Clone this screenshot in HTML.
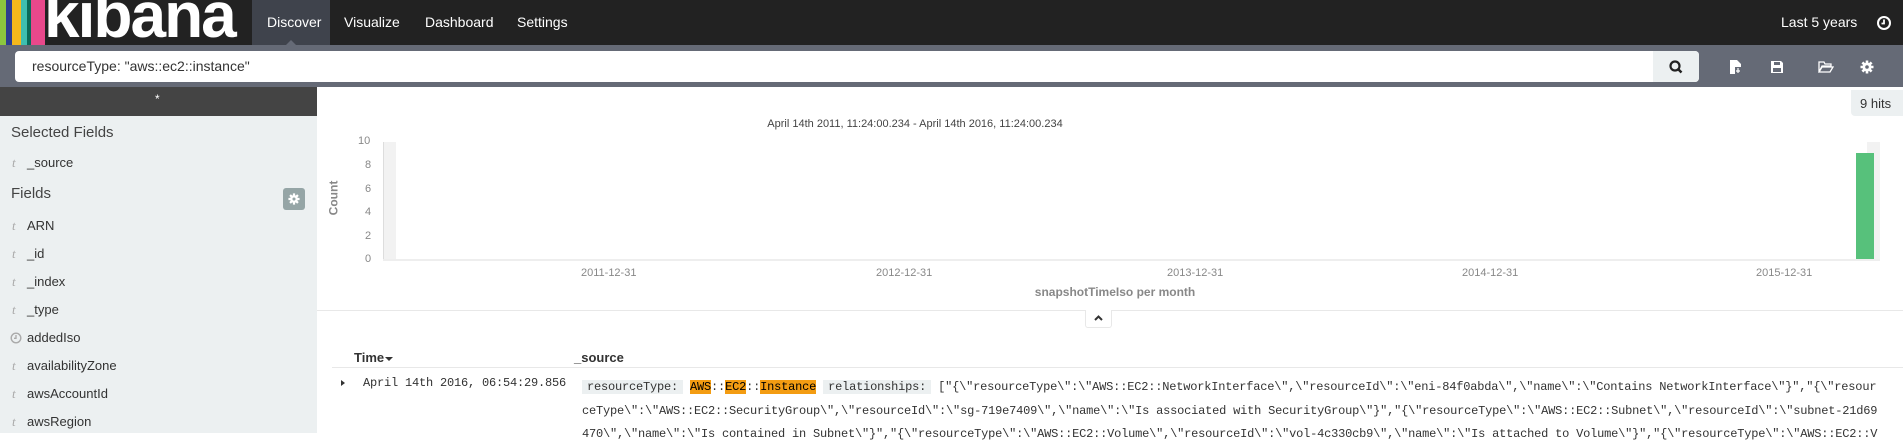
<!DOCTYPE html>
<html><head><meta charset="utf-8"><style>
*{margin:0;padding:0;box-sizing:border-box}
body{width:1903px;height:433px;overflow:hidden;background:#fff;font-family:"Liberation Sans",sans-serif;position:relative}
.a{position:absolute}
.nav{left:0;top:0;width:1903px;height:45px;background:#222}
.bar{top:0;height:45px}
.logo{left:44px;top:-17px;font-size:64px;font-weight:bold;color:#fff;letter-spacing:-2px;line-height:64px}
.tab{top:0;height:45px;line-height:45px;color:#fff;font-size:14px}
.srow{left:0;top:45px;width:1903px;height:42px;background:#656a76}
.side{left:0;top:87px;width:317px;height:346px;background:#ecf0f1}
.fld{left:27px;font-size:13px;color:#333}
.t{left:12px;font-size:13px;color:#aaa;font-family:"Liberation Serif",serif;font-style:italic}
.mono{font-family:"Liberation Mono",monospace;font-size:12px;letter-spacing:-0.2px;color:#333;white-space:pre}
.ax{color:#888;font-size:11px}
.hl{background:#f39c12;color:#000}
.key{background:#ecf0f1;padding:2px 5px}
</style></head><body>
<div class="a nav"></div>
<div class="a bar" style="left:0;width:6px;background:#8cc63f"></div>
<div class="a bar" style="left:6px;width:6px;background:#2d3e8f"></div>
<div class="a bar" style="left:12px;width:9px;background:#f5b81c"></div>
<div class="a bar" style="left:21px;width:6px;background:#3ebeb0"></div>
<div class="a bar" style="left:27px;width:4px;background:#0a6b5a"></div>
<div class="a bar" style="left:31px;width:14px;background:#e8488b"></div>
<div class="a logo">kibana</div>
<div class="a" style="left:252px;top:0;width:78px;height:45px;background:#3f434c"></div>
<div class="a" style="left:286px;top:40px;width:0;height:0;border-left:5px solid transparent;border-right:5px solid transparent;border-bottom:5px solid #656a76"></div>
<div class="a tab" style="left:267px">Discover</div>
<div class="a tab" style="left:344px">Visualize</div>
<div class="a tab" style="left:425px">Dashboard</div>
<div class="a tab" style="left:517px">Settings</div>
<div class="a" style="left:1781px;top:14px;color:#fff;font-size:14px">Last 5 years</div>
<svg class="a" style="left:1876px;top:15px" width="16" height="16" viewBox="0 0 16 16"><circle cx="8" cy="8" r="6" fill="none" stroke="#fff" stroke-width="2"/><path d="M8 4.5V8.5H5.5" stroke="#fff" stroke-width="1.8" fill="none"/></svg>
<div class="a srow"></div>
<div class="a" style="left:15px;top:51px;width:1684px;height:31px;background:#fff;border-radius:4px"></div>
<div class="a" style="left:1653px;top:51px;width:46px;height:31px;background:#ecf0f1;border-radius:0 4px 4px 0"></div>
<svg class="a" style="left:1668px;top:59px" width="16" height="16" viewBox="0 0 16 16"><circle cx="7" cy="7" r="4.5" fill="none" stroke="#222" stroke-width="2.2"/><path d="M10 10l3.5 3.5" stroke="#222" stroke-width="2.5"/></svg>
<div class="a" style="left:32px;top:58px;font-size:14px;color:#333">resourceType: "aws::ec2::instance"</div>
<svg class="a" style="left:1729px;top:59px" width="14" height="16" viewBox="0 0 14 16"><path d="M1 1h7l4 4v10H1z" fill="#fff"/><path d="M6 8h6v7H6z" fill="#656a76"/><path d="M9 9v5M7 12h4" stroke="#fff" stroke-width="1.2"/></svg>
<svg class="a" style="left:1770px;top:60px" width="14" height="14" viewBox="0 0 14 14"><path d="M1 1h10l2 2v10H1z" fill="#fff"/><rect x="4" y="2" width="6" height="3" fill="#656a76"/><rect x="3" y="8" width="8" height="4" fill="#656a76"/></svg>
<svg class="a" style="left:1818px;top:61px" width="16" height="12" viewBox="0 0 16 12"><path d="M1 1h5l1 2h6v2H4L1 11z M4 6h11l-3 5H1z" fill="none" stroke="#fff" stroke-width="1.3"/></svg>
<svg class="a" style="left:1860px;top:60px" width="14" height="14" viewBox="0 0 14 14"><circle cx="7" cy="7" r="4.5" fill="#fff"/><g stroke="#fff" stroke-width="2.6"><path d="M7 0.5v13M0.5 7h13M2.4 2.4l9.2 9.2M11.6 2.4l-9.2 9.2"/></g><circle cx="7" cy="7" r="1.8" fill="#656a76"/></svg>
<div class="a side"></div>
<div class="a" style="left:0;top:87px;width:317px;height:29px;background:#444"></div>
<div class="a" style="left:155px;top:92px;color:#fff;font-size:12px">*</div>
<div class="a" style="left:11px;top:124px;font-size:15px;color:#444">Selected Fields</div>
<div class="a t" style="top:155px">t</div><div class="a fld" style="top:155px">_source</div>
<div class="a" style="left:11px;top:185px;font-size:15px;color:#444">Fields</div>
<div class="a" style="left:283px;top:188px;width:22px;height:22px;background:#95a5a6;border-radius:3px"></div>
<svg class="a" style="left:288px;top:193px" width="12" height="12" viewBox="0 0 14 14"><circle cx="7" cy="7" r="4.5" fill="#fff"/><g stroke="#fff" stroke-width="2.6"><path d="M7 0.5v13M0.5 7h13M2.4 2.4l9.2 9.2M11.6 2.4l-9.2 9.2"/></g><circle cx="7" cy="7" r="1.8" fill="#95a5a6"/></svg>
<div class="a t" style="top:218px">t</div><div class="a fld" style="top:218px">ARN</div>
<div class="a t" style="top:246px">t</div><div class="a fld" style="top:246px">_id</div>
<div class="a t" style="top:274px">t</div><div class="a fld" style="top:274px">_index</div>
<div class="a t" style="top:302px">t</div><div class="a fld" style="top:302px">_type</div>
<svg class="a" style="left:10px;top:332px" width="12" height="12" viewBox="0 0 12 12"><circle cx="6" cy="6" r="4.8" fill="none" stroke="#aaa" stroke-width="1.4"/><path d="M6 3v3.3H4" stroke="#aaa" stroke-width="1.3" fill="none"/></svg>
<div class="a fld" style="top:330px">addedIso</div>
<div class="a t" style="top:358px">t</div><div class="a fld" style="top:358px">availabilityZone</div>
<div class="a t" style="top:386px">t</div><div class="a fld" style="top:386px">awsAccountId</div>
<div class="a t" style="top:414px">t</div><div class="a fld" style="top:414px">awsRegion</div>
<div class="a" style="left:1851px;top:90px;width:52px;height:26px;background:#ecf0f1;border-radius:0 0 0 4px"></div>
<div class="a" style="left:1860px;top:96px;font-size:13px;color:#333">9 hits</div>
<div class="a" style="left:320px;top:118px;width:1190px;text-align:center;font-size:11px;color:#444">April 14th 2011, 11:24:00.234 - April 14th 2016, 11:24:00.234</div>
<div class="a" style="left:384px;top:142px;width:12px;height:117px;background:#f2f2f2"></div>
<div class="a" style="left:1867px;top:142px;width:13px;height:117px;background:#f2f2f2"></div>
<div class="a" style="left:383px;top:142px;width:1px;height:118px;background:#ddd"></div>
<div class="a" style="left:383px;top:259px;width:1497px;height:2px;background:#eee"></div>
<div class="a" style="left:1856px;top:153px;width:18px;height:106px;background:#57c17b"></div>
<div class="a ax" style="left:358px;top:135px">10</div>
<div class="a ax" style="left:365px;top:159px">8</div>
<div class="a ax" style="left:365px;top:183px">6</div>
<div class="a ax" style="left:365px;top:206px">4</div>
<div class="a ax" style="left:365px;top:230px">2</div>
<div class="a ax" style="left:365px;top:253px">0</div>
<div class="a" style="left:316px;top:191px;transform:rotate(-90deg);font-size:12px;color:#888;font-weight:bold">Count</div>
<div class="a ax" style="left:581px;top:267px">2011-12-31</div>
<div class="a ax" style="left:876px;top:267px">2012-12-31</div>
<div class="a ax" style="left:1167px;top:267px">2013-12-31</div>
<div class="a ax" style="left:1462px;top:267px">2014-12-31</div>
<div class="a ax" style="left:1756px;top:267px">2015-12-31</div>
<div class="a" style="left:1020px;top:285px;width:190px;text-align:center;font-size:12px;color:#888;font-weight:bold">snapshotTimeIso per month</div>
<div class="a" style="left:317px;top:310px;width:1586px;height:1px;background:#e8e8e8"></div>
<div class="a" style="left:1085px;top:310px;width:27px;height:18px;background:#fff;border:1px solid #e8e8e8;border-top:none;border-radius:0 0 3px 3px"></div>
<svg class="a" style="left:1094px;top:315px" width="9" height="6" viewBox="0 0 9 6"><path d="M1 5L4.5 1.5 8 5" stroke="#333" stroke-width="2" fill="none"/></svg>
<div class="a" style="left:354px;top:350px;font-size:13px;font-weight:bold;color:#333">Time</div>
<div class="a" style="left:385px;top:357px;border-left:4px solid transparent;border-right:4px solid transparent;border-top:4px solid #333"></div>
<div class="a" style="left:574px;top:350px;font-size:13px;font-weight:bold;color:#333">_source</div>
<div class="a" style="left:332px;top:367px;width:1571px;height:1px;background:#e8e8e8"></div>
<div class="a" style="left:341px;top:380px;border-top:3.5px solid transparent;border-bottom:3.5px solid transparent;border-left:4px solid #333"></div>
<div class="a mono" style="left:363px;top:376px">April 14th 2016, 06:54:29.856</div>
<div class="a mono" style="left:582px;top:380px;width:1321px;overflow:hidden"><span class="key">resourceType:</span> <span class="hl">AWS</span>::<span class="hl">EC2</span>::<span class="hl">Instance</span> <span class="key">relationships:</span> ["{\"resourceType\":\"AWS::EC2::NetworkInterface\",\"resourceId\":\"eni-84f0abda\",\"name\":\"Contains NetworkInterface\"}","{\"resour</div>
<div class="a mono" style="left:582px;top:404px;width:1310px;overflow:hidden">ceType\":\"AWS::EC2::SecurityGroup\",\"resourceId\":\"sg-719e7409\",\"name\":\"Is associated with SecurityGroup\"}","{\"resourceType\":\"AWS::EC2::Subnet\",\"resourceId\":\"subnet-21d69</div>
<div class="a mono" style="left:582px;top:427px;width:1310px;overflow:hidden">470\",\"name\":\"Is contained in Subnet\"}","{\"resourceType\":\"AWS::EC2::Volume\",\"resourceId\":\"vol-4c330cb9\",\"name\":\"Is attached to Volume\"}","{\"resourceType\":\"AWS::EC2::V</div>
</body></html>
